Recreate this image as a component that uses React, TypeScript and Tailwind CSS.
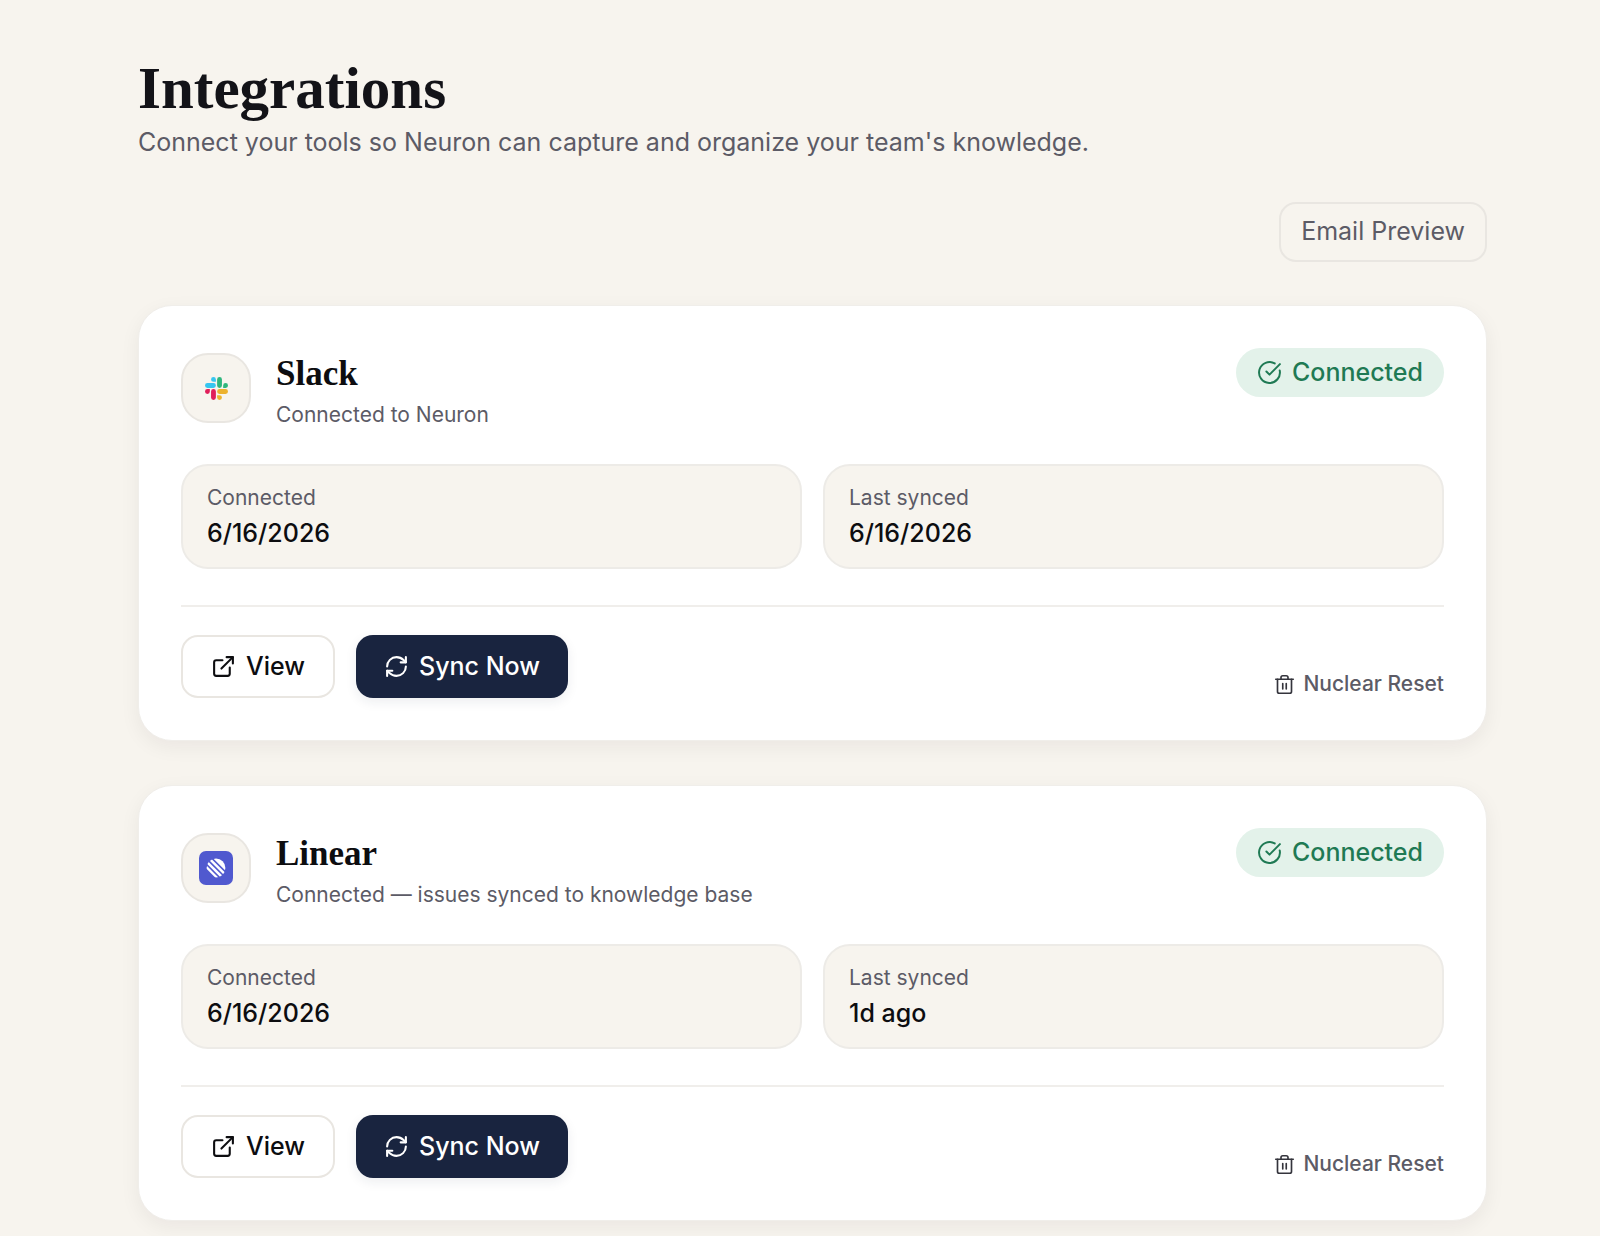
import type { ReactNode } from "react";

function SlackLogo() {
  return (
    <svg viewBox="0 0 24 24" className="size-[23px]" aria-hidden="true">
      <path fill="#E01E5A" d="M5.042 15.165a2.528 2.528 0 0 1-2.52 2.523A2.528 2.528 0 0 1 0 15.165a2.527 2.527 0 0 1 2.522-2.52h2.52v2.52zM6.313 15.165a2.527 2.527 0 0 1 2.521-2.52 2.527 2.527 0 0 1 2.521 2.52v6.313A2.528 2.528 0 0 1 8.834 24a2.528 2.528 0 0 1-2.521-2.522v-6.313z" />
      <path fill="#36C5F0" d="M8.834 5.042a2.528 2.528 0 0 1-2.521-2.52A2.528 2.528 0 0 1 8.834 0a2.528 2.528 0 0 1 2.521 2.522v2.52H8.834zM8.834 6.313a2.528 2.528 0 0 1 2.521 2.521 2.528 2.528 0 0 1-2.521 2.521H2.522A2.528 2.528 0 0 1 0 8.834a2.528 2.528 0 0 1 2.522-2.521h6.312z" />
      <path fill="#2EB67D" d="M18.956 8.834a2.528 2.528 0 0 1 2.522-2.521A2.528 2.528 0 0 1 24 8.834a2.528 2.528 0 0 1-2.522 2.521h-2.522V8.834zM17.688 8.834a2.528 2.528 0 0 1-2.523 2.521 2.527 2.527 0 0 1-2.52-2.521V2.522A2.527 2.527 0 0 1 15.165 0a2.528 2.528 0 0 1 2.523 2.522v6.312z" />
      <path fill="#ECB22E" d="M15.165 18.956a2.528 2.528 0 0 1 2.523 2.522A2.528 2.528 0 0 1 15.165 24a2.527 2.527 0 0 1-2.52-2.522v-2.522h2.52zM15.165 17.688a2.527 2.527 0 0 1-2.52-2.523 2.526 2.526 0 0 1 2.52-2.52h6.313A2.527 2.527 0 0 1 24 15.165a2.528 2.528 0 0 1-2.522 2.523h-6.313z" />
    </svg>
  );
}

function LinearLogo() {
  return (
    <svg viewBox="0 0 34 34" className="size-[34px]" aria-hidden="true">
      <defs>
        <clipPath id="linear-disc">
          <circle cx="17" cy="17" r="9.4" />
        </clipPath>
      </defs>
      <rect width="34" height="34" rx="7" fill="#5059cf" />
      <g clipPath="url(#linear-disc)">
        <g transform="rotate(45 17 17)" fill="#fff">
          <rect x="5" y="7" width="24" height="5.2" />
          <rect x="5" y="13.8" width="24" height="2.5" />
          <rect x="5" y="17.9" width="24" height="2.5" />
          <rect x="5" y="22" width="24" height="2.3" />
        </g>
      </g>
    </svg>
  );
}

type IconProps = { className: string; width?: number; children: ReactNode };

function Icon({ className, width = 2, children }: IconProps) {
  return (
    <svg
      viewBox="0 0 24 24"
      className={className}
      fill="none"
      stroke="currentColor"
      strokeWidth={width}
      strokeLinecap="round"
      strokeLinejoin="round"
      aria-hidden="true"
    >
      {children}
    </svg>
  );
}

function Fact({ label, value }: { label: string; value: string }) {
  return (
    <div className="flex-1 rounded-[27px] border-2 border-[#edebe7] bg-[#f7f4ee] px-6 pb-[17px] pt-[14px]">
      <dt className="text-[21px] leading-9 text-[#5c5b66]">{label}</dt>
      <dd className="text-[25px] font-medium leading-[34px] text-[#0d0d10]">{value}</dd>
    </div>
  );
}

type Integration = {
  name: string;
  description: string;
  logo: ReactNode;
  connected: string;
  synced: string;
};

function IntegrationCard({ name, description, logo, connected, synced }: Integration) {
  return (
    <section className="rounded-[34px] border border-[#f0eeea] bg-white p-[42px] shadow-[0_6px_20px_rgba(30,20,40,0.06)]">
      <div className="flex items-start justify-between">
        <div className="mt-[5px] flex items-start gap-[25px]">
          <div className="flex size-[70px] items-center justify-center rounded-[27px] border-2 border-[#e9e6e1] bg-[#f7f4ee]">
            {logo}
          </div>
          <div>
            <h2 className="font-['Liberation_Serif',serif] text-[35px] font-bold leading-[42px] text-[#0d0d10]">
              {name}
            </h2>
            <p className="text-[21px] leading-10 text-[#5c5b66]">{description}</p>
          </div>
        </div>
        <span className="flex h-[49px] items-center gap-[10px] rounded-full bg-[#e3f2ea] px-[21px] text-[25px] font-medium text-[#1f7a54]">
          <Icon className="size-[25px]" width={1.9}>
            <path d="M21.8 10A10 10 0 1 1 17 3.335" />
            <path d="m9 11 3 3L22 4" />
          </Icon>
          Connected
        </span>
      </div>

      <dl className="mt-[29px] flex gap-[21px]">
        <Fact label="Connected" value={connected} />
        <Fact label="Last synced" value={synced} />
      </dl>

      <div className="mt-9 flex items-end justify-between border-t-2 border-[#f0eeeb] pt-7">
        <div className="flex gap-[21px]">
          <button className="flex h-[63px] items-center gap-[10px] rounded-[17px] border-2 border-[#e9e6e1] bg-white px-7 text-[25px] font-medium text-[#0d0d10]">
            <Icon className="size-[25px]">
              <path d="M15 3h6v6" />
              <path d="M10 14 21 3" />
              <path d="M18 13v6a2 2 0 0 1-2 2H5a2 2 0 0 1-2-2V8a2 2 0 0 1 2-2h6" />
            </Icon>
            View
          </button>
          <button className="flex h-[63px] items-center gap-[10px] rounded-[17px] bg-[#19243f] px-7 text-[25px] font-medium text-white shadow-[0_4px_12px_rgba(25,36,63,0.08)]">
            <Icon className="size-[25px]">
              <path d="M3 12a9 9 0 0 1 9-9 9.75 9.75 0 0 1 6.74 2.74L21 8" />
              <path d="M21 3v5h-5" />
              <path d="M21 12a9 9 0 0 1-9 9 9.75 9.75 0 0 1-6.74-2.74L3 16" />
              <path d="M8 16H3v5" />
            </Icon>
            Sync Now
          </button>
        </div>
        <button className="flex items-center gap-2 text-[21px] font-medium leading-7 text-[#5c5b66]">
          <Icon className="size-[21px] text-[#34343c]" width={1.9}>
            <path d="M2 6h20" />
            <path d="M20 6v14a2 2 0 0 1-2 2H6a2 2 0 0 1-2-2V6" />
            <path d="M8 6V4a2 2 0 0 1 2-2h4a2 2 0 0 1 2 2v2" />
            <path d="M10 11v6" />
            <path d="M14 11v6" />
          </Icon>
          Nuclear Reset
        </button>
      </div>
    </section>
  );
}

const integrations: Integration[] = [
  {
    name: "Slack",
    description: "Connected to Neuron",
    logo: <SlackLogo />,
    connected: "6/16/2026",
    synced: "6/16/2026",
  },
  {
    name: "Linear",
    description: "Connected — issues synced to knowledge base",
    logo: <LinearLogo />,
    connected: "6/16/2026",
    synced: "1d ago",
  },
];

export default function App() {
  return (
    <main className="min-h-screen bg-[#f7f4ee] pl-[138px] pr-[113px] pt-14 font-['Inter',sans-serif]">
      <h1 className="font-['Liberation_Serif',serif] text-[59px] font-bold leading-[64px] text-[#131318]">
        Integrations
      </h1>
      <p className="text-[25px] leading-[44px] text-[#5c5b66]">
        Connect your tools so Neuron can capture and organize your team's knowledge.
      </p>
      <div className="mt-[38px] flex justify-end">
        <button className="h-[60px] rounded-[17px] border-2 border-[#e9e6e1] px-5 text-[25px] text-[#5c5b66]">
          Email Preview
        </button>
      </div>
      <div className="mt-[43px] flex flex-col gap-[44px]">
        {integrations.map((item) => (
          <IntegrationCard key={item.name} {...item} />
        ))}
      </div>
    </main>
  );
}
